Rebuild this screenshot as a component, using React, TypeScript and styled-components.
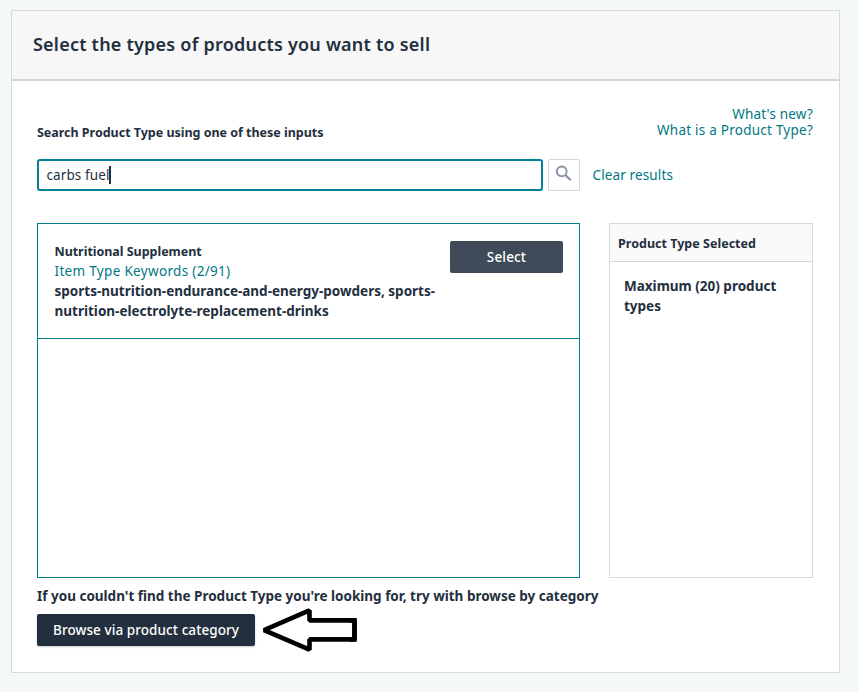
import React from "react";
import styled, { createGlobalStyle } from "styled-components";

const GlobalStyle = createGlobalStyle`
  * { box-sizing: border-box; }
  body {
    margin: 0;
    background: #f4f8f9;
    color: #232f3e;
    font-family: "Noto Sans", "Open Sans", sans-serif;
    font-size: 13.5px;
    line-height: 20px;
  }
`;

const Page = styled.main`
  height: 692px;
  padding: 10px 18px 19px 11px;
`;

const Card = styled.section`
  height: 663px;
  border: 1px solid #d5d9dc;
  background: #fff;
`;

const CardHeader = styled.header`
  height: 70px;
  padding: 19px 20px 0 21px;
  background: #f7f7f7;
  border-bottom: 2px solid #d4d5d9;
`;

const Title = styled.h1`
  margin: 0;
  font-size: 18px;
  line-height: 28px;
  font-weight: 600;
  letter-spacing: 0.22px;
`;

const Body = styled.div`
  padding: 25px 26px 0 25px;
`;

const IntroRow = styled.div`
  display: flex;
  justify-content: space-between;
  height: 53px;
`;

const Text = styled.p<{ $weight?: number; $size?: number; $spacing?: number }>`
  margin: 0;
  white-space: nowrap;
  font-weight: ${(p) => p.$weight ?? 700};
  font-size: ${(p) => p.$size ?? 13.5}px;
  letter-spacing: ${(p) => p.$spacing ?? 0}px;
`;

const SearchLabel = styled(Text)`
  padding-top: 17px;
`;

const ItemName = styled(Text)`
  padding-top: 1px;
  line-height: 19px;
`;

const Link = styled.a<{ $spacing?: number }>`
  color: #007884;
  text-decoration: none;
  white-space: nowrap;
  letter-spacing: ${(p) => p.$spacing ?? 0}px;
`;

const HelpLinks = styled.nav`
  display: flex;
  flex-direction: column;
  align-items: flex-end;
  line-height: 16px;
`;

const SearchRow = styled.div`
  display: flex;
  align-items: center;
  height: 32px;
`;

const SearchField = styled.div`
  display: flex;
  align-items: center;
  width: 506px;
  height: 32px;
  padding-left: 7.5px;
  border: 2px solid #008296;
  border-radius: 3px;
`;

const Caret = styled.span`
  width: 2px;
  height: 18px;
  margin-left: -1px;
  background: #232f3e;
`;

const IconButton = styled.button`
  display: flex;
  align-items: flex-start;
  justify-content: flex-start;
  width: 32px;
  height: 32px;
  margin: 0 12.5px 0 5px;
  padding: 5px 0 0 6px;
  border: 1px solid #d5d6d9;
  border-radius: 2px;
  background: #fff;
`;

const Panels = styled.div`
  display: flex;
  justify-content: space-between;
  height: 355px;
  margin-top: 32px;
`;

const Results = styled.div`
  width: 543px;
  border: 1px solid #007f8d;
`;

const ResultItem = styled.article`
  display: flex;
  justify-content: space-between;
  height: 115px;
  padding: 17px 16px 0 16.5px;
  border-bottom: 1px solid #007f8d;
`;

const Button = styled.button<{ $width: number; $tone: string; $spacing?: number; $raised?: boolean }>`
  flex: none;
  width: ${(p) => p.$width}px;
  height: 32px;
  padding: 0;
  border: 0;
  border-radius: 2px;
  background: ${(p) => p.$tone};
  color: #fff;
  font: 500 13.5px/32px "Noto Sans", sans-serif;
  letter-spacing: ${(p) => p.$spacing ?? 0}px;
  white-space: nowrap;
  box-shadow: ${(p) => (p.$raised ? "0 1px 2px rgba(35, 47, 62, 0.25)" : "none")};
`;

const Selected = styled.aside`
  width: 204px;
  border: 1px solid #d5d9d9;
`;

const SelectedHeader = styled.div`
  height: 38px;
  padding: 10px 8px 0;
  background: #fafafa;
  border-bottom: 1px solid #d5d9d9;
`;

const SelectedBody = styled.div`
  padding: 14px;
`;

const Footer = styled.footer`
  padding-top: 8px;
`;

const FooterActions = styled.div`
  display: flex;
  align-items: center;
  gap: 6px;
  height: 32px;
  margin-top: 8px;
`;

const SearchIcon = () => (
  <svg width="18" height="18" viewBox="0 0 18 18" fill="none" stroke="#8593a3" strokeWidth="1.9">
    <circle cx="6.7" cy="6.4" r="4.9" />
    <path d="M10.2 9.9 15.7 15.2" strokeWidth="2.2" />
  </svg>
);

const Arrow = () => (
  <svg width="98" height="46" viewBox="261 607 98 46" fill="#fff" stroke="#000" strokeWidth="4.6">
    <path d="M264 630.1 309.5 610.4V620.4H354.5V639.4H309.5V649.7Z" strokeLinejoin="bevel" />
    <path d="M350 620.4H354.5V639.4H350" fill="none" />
  </svg>
);

export default function App() {
  return (
    <>
      <GlobalStyle />
      <Page>
        <Card>
          <CardHeader>
            <Title>Select the types of products you want to sell</Title>
          </CardHeader>
          <Body>
            <IntroRow>
              <SearchLabel $size={12.5} $spacing={-0.02}>Search Product Type using one of these inputs</SearchLabel>
              <HelpLinks>
                <Link $spacing={0.2}>What's new?</Link>
                <Link $spacing={0.24}>What is a Product Type?</Link>
              </HelpLinks>
            </IntroRow>
            <SearchRow>
              <SearchField>
                <Text $weight={400} $spacing={0.1}>carbs fuel</Text>
                <Caret />
              </SearchField>
              <IconButton aria-label="Search">
                <SearchIcon />
              </IconButton>
              <Link $spacing={0.13}>Clear results</Link>
            </SearchRow>
            <Panels>
              <Results>
                <ResultItem>
                  <div>
                    <ItemName $size={12.5} $spacing={-0.03}>Nutritional Supplement</ItemName>
                    <Text as="div" $weight={400}><Link $spacing={0.32}>Item Type Keywords (2/91)</Link></Text>
                    <Text>
                      sports-nutrition-endurance-and-energy-powders, sports-
                      <br />
                      nutrition-electrolyte-replacement-drinks
                    </Text>
                  </div>
                  <Button $width={113} $tone="#3f4b59" $spacing={0.15}>Select</Button>
                </ResultItem>
              </Results>
              <Selected>
                <SelectedHeader>
                  <Text $size={12.5} $spacing={0.02}>Product Type Selected</Text>
                </SelectedHeader>
                <SelectedBody>
                  <Text>
                    Maximum (20) product
                    <br />
                    types
                  </Text>
                </SelectedBody>
              </Selected>
            </Panels>
            <Footer>
              <Text>
                If you couldn't find the Product Type you're looking for, try with browse by category
              </Text>
              <FooterActions>
                <Button $width={218} $tone="#232f3e" $spacing={0.08} $raised>Browse via product category</Button>
                <Arrow />
              </FooterActions>
            </Footer>
          </Body>
        </Card>
      </Page>
    </>
  );
}
